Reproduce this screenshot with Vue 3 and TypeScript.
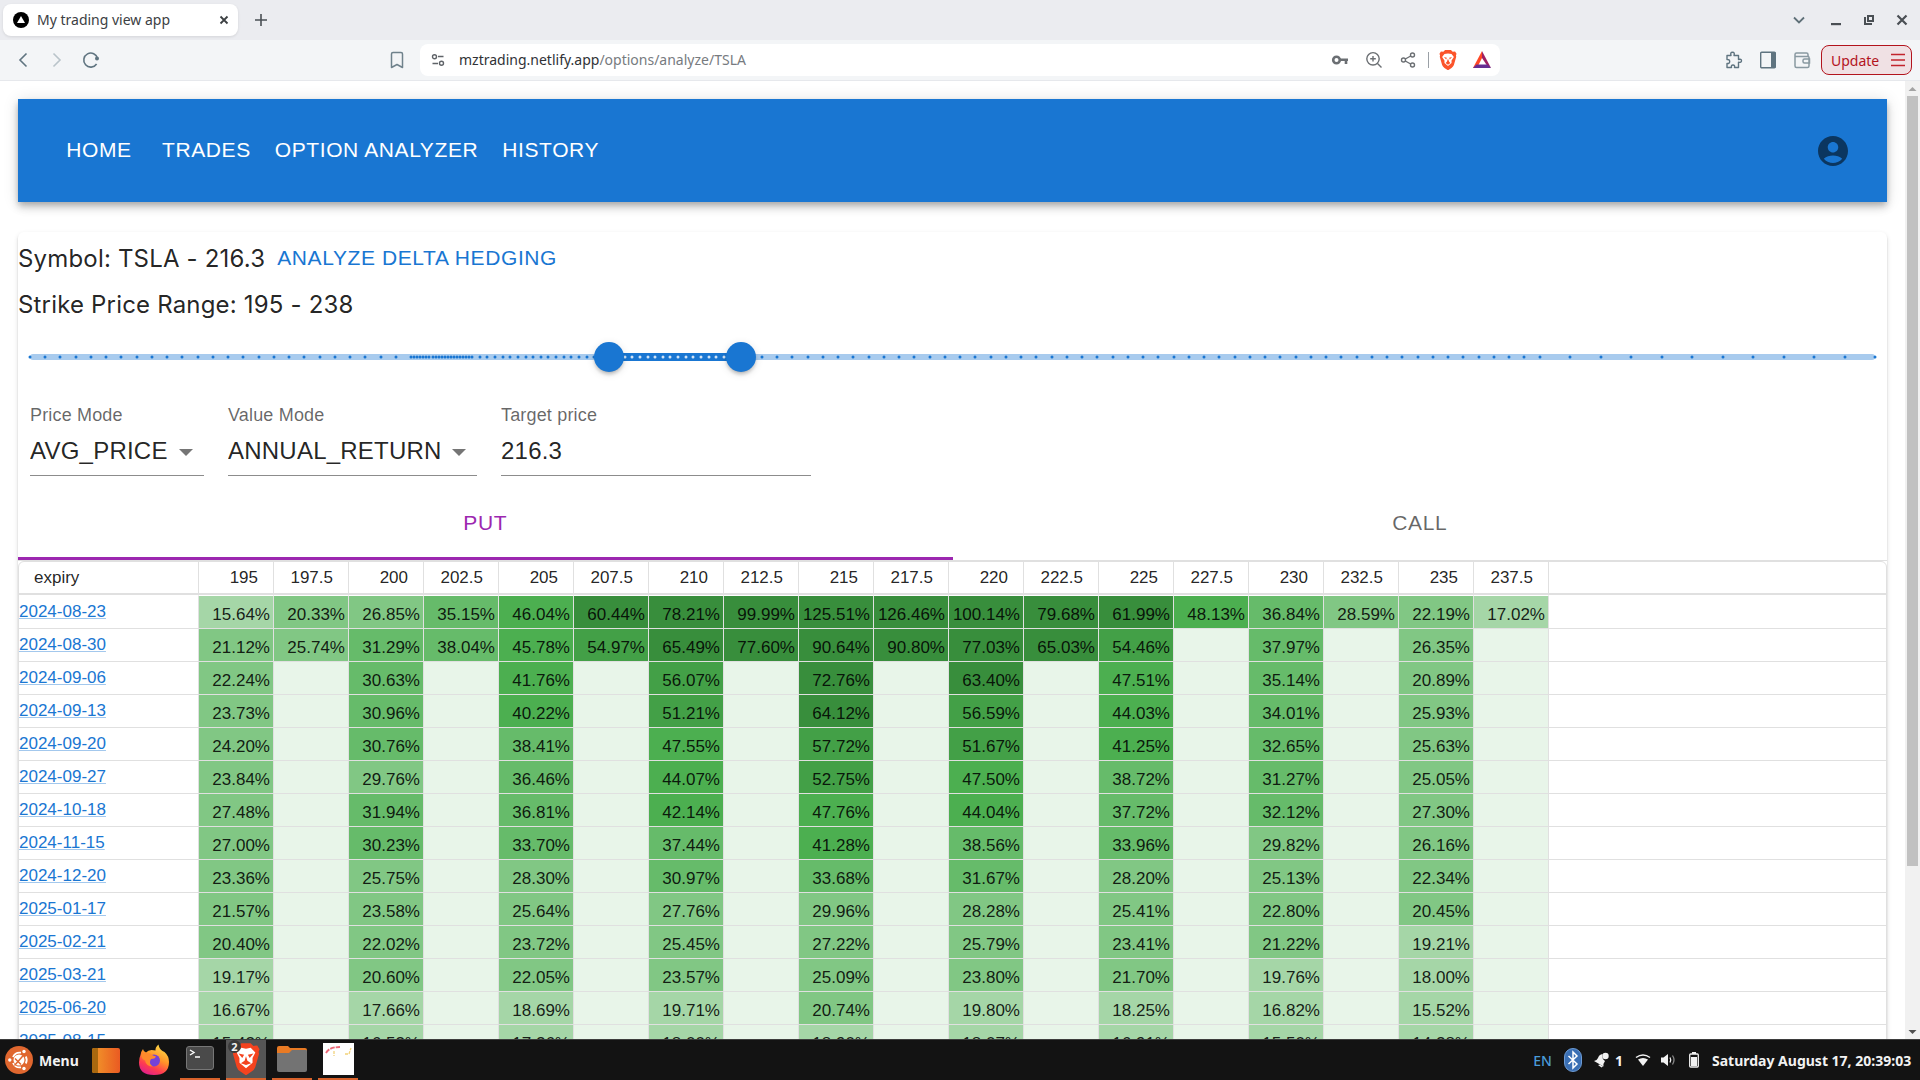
<script setup lang="ts">
import { computed, ref } from 'vue'

const MIN_STRIKE = 5
const MAX_STRIKE = 610

const low = ref(195)
const high = ref(238)
const priceMode = ref('AVG_PRICE')
const valueMode = ref('ANNUAL_RETURN')
const targetPrice = ref('216.3')
const side = ref<'PUT' | 'CALL'>('PUT')

function range(from: number, to: number, step: number): number[] {
  const out: number[] = []
  for (let v = from; v < to; v += step) out.push(v)
  return out
}

const allStrikes = [
  ...range(5, 130, 5),
  ...range(130, 150, 1),
  ...range(150, 240, 2.5),
  ...range(240, 500, 5),
  ...range(500, 611, 10),
]

const percent = (v: number) => ((v - MIN_STRIKE) / (MAX_STRIKE - MIN_STRIKE)) * 100

const marks = computed(() =>
  allStrikes.map((v) => ({ v, left: percent(v) + '%', active: v >= low.value && v <= high.value })),
)
const activeTrack = computed(() => ({
  left: percent(low.value) + '%',
  width: percent(high.value) - percent(low.value) + '%',
}))

const strikes = [195, 197.5, 200, 202.5, 205, 207.5, 210, 212.5, 215, 217.5, 220, 222.5, 225, 227.5, 230, 232.5, 235, 237.5]

// An underscore marks a strike that is not listed for the expiry.
const source: [string, string][] = [
  ['2024-08-23', '15.64 20.33 26.85 35.15 46.04 60.44 78.21 99.99 125.51 126.46 100.14 79.68 61.99 48.13 36.84 28.59 22.19 17.02'],
  ['2024-08-30', '21.12 25.74 31.29 38.04 45.78 54.97 65.49 77.60 90.64 90.80 77.03 65.03 54.46 _ 37.97 _ 26.35 _'],
  ['2024-09-06', '22.24 _ 30.63 _ 41.76 _ 56.07 _ 72.76 _ 63.40 _ 47.51 _ 35.14 _ 20.89 _'],
  ['2024-09-13', '23.73 _ 30.96 _ 40.22 _ 51.21 _ 64.12 _ 56.59 _ 44.03 _ 34.01 _ 25.93 _'],
  ['2024-09-20', '24.20 _ 30.76 _ 38.41 _ 47.55 _ 57.72 _ 51.67 _ 41.25 _ 32.65 _ 25.63 _'],
  ['2024-09-27', '23.84 _ 29.76 _ 36.46 _ 44.07 _ 52.75 _ 47.50 _ 38.72 _ 31.27 _ 25.05 _'],
  ['2024-10-18', '27.48 _ 31.94 _ 36.81 _ 42.14 _ 47.76 _ 44.04 _ 37.72 _ 32.12 _ 27.30 _'],
  ['2024-11-15', '27.00 _ 30.23 _ 33.70 _ 37.44 _ 41.28 _ 38.56 _ 33.96 _ 29.82 _ 26.16 _'],
  ['2024-12-20', '23.36 _ 25.75 _ 28.30 _ 30.97 _ 33.68 _ 31.67 _ 28.20 _ 25.13 _ 22.34 _'],
  ['2025-01-17', '21.57 _ 23.58 _ 25.64 _ 27.76 _ 29.96 _ 28.28 _ 25.41 _ 22.80 _ 20.45 _'],
  ['2025-02-21', '20.40 _ 22.02 _ 23.72 _ 25.45 _ 27.22 _ 25.79 _ 23.41 _ 21.22 _ 19.21 _'],
  ['2025-03-21', '19.17 _ 20.60 _ 22.05 _ 23.57 _ 25.09 _ 23.80 _ 21.70 _ 19.76 _ 18.00 _'],
  ['2025-06-20', '16.67 _ 17.66 _ 18.69 _ 19.71 _ 20.74 _ 19.80 _ 18.25 _ 16.82 _ 15.52 _'],
  ['2025-08-15', '15.42 _ 16.53 _ 17.26 _ 18.00 _ 18.90 _ 18.07 _ 16.91 _ 15.50 _ 14.28 _'],
]

function shade(v: string): string {
  if (v === '_') return 'g50'
  const n = parseFloat(v)
  if (n < 20) return 'g200'
  if (n < 30) return 'g300'
  if (n < 40) return 'g400'
  if (n < 50) return 'g500'
  if (n < 60) return 'g600'
  return 'g700'
}

const rows = source.map(([expiry, values]) => ({
  expiry,
  cells: values.split(' ').map((v) => ({ text: v === '_' ? '' : v + '%', shade: shade(v) })),
}))
</script>

<template>
  <div class="desktop">
    <header class="tabstrip">
      <div class="tab">
        <svg width="16" height="16" viewBox="0 0 16 16"><circle cx="8" cy="8" r="8" /><path d="M8 4l4 7H4z" fill="#fff" /></svg>
        <span class="tab-title">My trading view app</span>
        <button class="icon" aria-label="Close tab">
          <svg width="16" height="16" viewBox="0 0 16 16" fill="none" stroke="#3c4043" stroke-width="1.800"><path d="M4.500 4.500l7 7M11.500 4.500l-7 7" /></svg>
        </button>
      </div>
      <button class="icon new-tab" aria-label="New tab">
        <svg width="16" height="16" viewBox="0 0 16 16" fill="none" stroke="#4a4f54" stroke-width="1.600"><path d="M8 2v12M2 8h12" /></svg>
      </button>
      <div class="window-buttons">
        <button class="icon search-tabs" aria-label="Search tabs">
          <svg width="16" height="16" viewBox="0 0 16 16" fill="none" stroke="#5f7078" stroke-width="1.800"><path d="M3 5.500l5 5 5-5" /></svg>
        </button>
        <button class="icon" aria-label="Minimize">
          <svg width="16" height="16" viewBox="0 0 16 16"><path d="M3 11h10v2.200H3z" fill="#4a4f54" /></svg>
        </button>
        <button class="icon" aria-label="Restore">
          <svg width="16" height="16" viewBox="0 0 16 16" fill="none" stroke="#4a4f54" stroke-width="2"><path d="M7 4h5v5H7zM4 5v7h7" /></svg>
        </button>
        <button class="icon" aria-label="Close window">
          <svg width="16" height="16" viewBox="0 0 16 16" fill="none" stroke="#4a4f54" stroke-width="2.200"><path d="M3.500 3.500l9 9M12.500 3.500l-9 9" /></svg>
        </button>
      </div>
    </header>

    <div class="toolbar">
      <div class="bar-left">
        <button class="icon" aria-label="Back">
          <svg width="18" height="18" viewBox="0 0 18 18" fill="none" stroke="#5f7480" stroke-width="1.600"><path d="M12.500 2.500L6 9l6.500 6.500" /></svg>
        </button>
        <button class="icon" aria-label="Forward">
          <svg width="18" height="18" viewBox="0 0 18 18" fill="none" stroke="#b9c4ca" stroke-width="1.600"><path d="M5.500 2.500L12 9l-6.500 6.500" /></svg>
        </button>
        <button class="icon" aria-label="Reload">
          <svg width="18" height="18" viewBox="0 0 18 18" fill="none" stroke="#5f7480" stroke-width="1.600"><path d="M14.600 13A7 7 0 1 1 15.600 7.500" /><circle cx="15" cy="7.500" r="2" fill="#5f7480" stroke="none" /></svg>
        </button>
        <button class="icon bookmark" aria-label="Bookmark this page">
          <svg width="18" height="18" viewBox="0 0 18 18" fill="none" stroke="#6f828c" stroke-width="1.500" stroke-linejoin="round"><path d="M3.500 3q0-1.500 1.500-1.500h8q1.500 0 1.500 1.500v13.500L9 13.500l-5.500 3z" /></svg>
        </button>
      </div>
      <div class="urlbar">
        <svg width="14" height="14" viewBox="0 0 14 14" fill="none" stroke="#5f6368" stroke-width="1.400"><circle cx="3.500" cy="3.800" r="2" /><path d="M7 3.500h5.500M1.500 10.500H7" /><circle cx="10.500" cy="10.200" r="2" /></svg>
        <div class="url"><span>mztrading.netlify.app</span>/options/analyze/TSLA</div>
        <div class="url-actions">
          <button class="icon" aria-label="Passwords">
            <svg width="18" height="18" viewBox="0 0 18 18" fill="none" stroke="#6b6f73"><circle cx="5.500" cy="9" r="3.300" stroke-width="2.600" /><path d="M9 8.700h8M15 9v4" stroke-width="2.600" /></svg>
          </button>
          <button class="icon" aria-label="Zoom">
            <svg width="18" height="18" viewBox="0 0 18 18" fill="none" stroke="#6b6f73" stroke-width="1.400"><circle cx="8" cy="7.800" r="6.200" /><path d="M12.500 12.400l4 4M8 5v5.600M5.200 7.800h5.600" /></svg>
          </button>
          <button class="icon" aria-label="Share">
            <svg width="18" height="18" viewBox="0 0 18 18" fill="none" stroke="#6b6f73" stroke-width="1.400"><circle cx="4.500" cy="9" r="2" /><circle cx="13.500" cy="4" r="2" /><circle cx="13.500" cy="14" r="2" /><path d="M6.300 8l5.400-3M6.300 10l5.400 3" /></svg>
          </button>
          <span class="separator"></span>
          <button class="icon" aria-label="Brave Shields">
            <svg width="18" height="20" viewBox="0 0 30 34"><path d="M7 3l3-3h10l3 3 4-.5 2.500 4-1 3 .5 2-4 14q-1 3-4 5l-6 4-6-4q-3-2-4-5L1 11.500l.5-2-1-3 2.500-4z" fill="#fb542b" /><path d="M15 6l6 1 4 5-4 6v4l-6 5-6-5v-4l-4-6 4-5z" fill="#fff" /><path d="M8 12l5 1-1 3zM22 12l-5 1 1 3zM15 15l2 5 2 2-4 3-4-3 2-2z" fill="#fb542b" /></svg>
          </button>
          <button class="icon" aria-label="Brave Rewards">
            <svg width="18" height="18" viewBox="0 0 18 18"><path d="M9 0L0 17h4l5-10z" fill="#ff4724" /><path d="M9 0l9 17-4-2.500L9 7z" fill="#9e1f63" /><path d="M0 17l3.500-3.500h11L18 17z" fill="#662d91" /></svg>
          </button>
        </div>
      </div>
      <div class="bar-right">
        <button class="icon" aria-label="Extensions">
          <svg width="18" height="18" viewBox="0 0 18 18" fill="none" stroke="#5f7480" stroke-width="1.400" stroke-linejoin="round"><path d="M2 4.500h4q-1-3.300 1.500-3.300T9 4.500h4.500v4q3-.8 3 1.300t-3 1.400v5.300h-4q.6-2.500-1.500-2.500t-1.500 2.500H2v-4q2.700.3 2.700-2T2 8.500z" /></svg>
        </button>
        <button class="icon" aria-label="Sidebar">
          <svg width="18" height="18" viewBox="0 0 18 18"><rect x="1.700" y="1.200" width="14.600" height="15.600" rx="1" fill="none" stroke="#5f7480" stroke-width="1.400" /><path d="M12 1h4.500v16H12z" fill="#5f7480" /></svg>
        </button>
        <button class="icon" aria-label="Wallet">
          <svg width="18" height="18" viewBox="0 0 18 18" fill="none" stroke="#8999a1" stroke-width="1.500"><path d="M16 5.500V15q0 1.500-1.500 1.500h-11Q2 16.500 2 15V3.500Q2 2 3.500 2h10q1.500 0 1.500 1.500V5M2 5.500h14M16.500 8h-5q-1.500 0-1.500 1.500v1q0 1.500 1.500 1.500h5z" /></svg>
        </button>
        <button class="update">
          Update
          <svg width="14" height="14" viewBox="0 0 14 14" stroke="#c2242c" stroke-width="1.500"><path d="M0 1.500h14M0 7h14M0 12.500h14" /></svg>
        </button>
      </div>
    </div>

    <div class="viewport">
      <main class="page">
        <nav class="appbar">
          <a href="#home">HOME</a>
          <a href="#trades">TRADES</a>
          <a href="#options">OPTION ANALYZER</a>
          <a href="#history">HISTORY</a>
          <button class="icon account" aria-label="Account">
            <svg width="36" height="36" viewBox="0 0 24 24" fill="#0b3660"><path d="M12 2C6.480 2 2 6.480 2 12s4.480 10 10 10 10-4.480 10-10S17.520 2 12 2zm0 4c1.930 0 3.500 1.570 3.500 3.500S13.930 13 12 13s-3.500-1.570-3.500-3.500S10.070 6 12 6zm0 14c-2.030 0-4.430-.82-6.140-2.880C7.550 15.800 9.680 15 12 15s4.450.8 6.140 2.120C16.430 19.180 14.030 20 12 20z" /></svg>
          </button>
        </nav>

        <section class="card">
          <div class="line">
            <span>Symbol: TSLA - 216.3</span>
            <a href="#hedging">ANALYZE DELTA HEDGING</a>
          </div>
          <div class="line">Strike Price Range: {{ low }} - {{ high }}</div>

          <div class="slider">
            <div class="rail"></div>
            <div class="active" :style="activeTrack"></div>
            <i v-for="m in marks" :key="m.v" class="mark" :class="{ on: m.active }" :style="{ left: m.left }"></i>
            <input v-model.number="low" type="range" :min="MIN_STRIKE" :max="MAX_STRIKE" step="1" aria-label="Lowest strike" />
            <input v-model.number="high" type="range" :min="MIN_STRIKE" :max="MAX_STRIKE" step="1" aria-label="Highest strike" />
          </div>

          <form class="controls" @submit.prevent>
            <div class="field price">
              <label for="price-mode">Price Mode</label>
              <div class="select">
                <select id="price-mode" v-model="priceMode">
                  <option>AVG_PRICE</option>
                  <option>BID_PRICE</option>
                  <option>ASK_PRICE</option>
                </select>
              </div>
            </div>
            <div class="field value">
              <label for="value-mode">Value Mode</label>
              <div class="select">
                <select id="value-mode" v-model="valueMode">
                  <option>ANNUAL_RETURN</option>
                  <option>TOTAL_RETURN</option>
                  <option>PRICE</option>
                </select>
              </div>
            </div>
            <div class="field target">
              <label for="target-price">Target price</label>
              <input id="target-price" v-model="targetPrice" type="text" />
            </div>
          </form>

          <div class="tabs" role="tablist">
            <button role="tab" :aria-selected="side === 'PUT'" :class="{ selected: side === 'PUT' }" @click="side = 'PUT'">PUT</button>
            <button role="tab" :aria-selected="side === 'CALL'" :class="{ selected: side === 'CALL' }" @click="side = 'CALL'">CALL</button>
          </div>

          <div class="grid">
            <table>
              <thead>
                <tr>
                  <th class="expiry">expiry</th>
                  <th v-for="s in strikes" :key="s" class="strike">{{ s }}</th>
                  <th class="filler"></th>
                </tr>
              </thead>
              <tbody>
                <tr v-for="row in rows" :key="row.expiry">
                  <td class="expiry"><a :href="'#' + row.expiry">{{ row.expiry }}</a></td>
                  <td v-for="(cell, i) in row.cells" :key="i" class="num" :class="cell.shade">{{ cell.text }}</td>
                  <td class="filler"></td>
                </tr>
              </tbody>
            </table>
          </div>
        </section>
      </main>
      <div class="scrollbar">
        <svg width="15" height="15" viewBox="0 0 15 15"><path d="M3.500 10L7.500 6l4 4z" fill="#a3a3a3" /></svg>
        <div class="scroll-area"><div class="scroll-thumb"></div></div>
        <svg width="15" height="15" viewBox="0 0 15 15"><path d="M3.500 6l4 4 4-4z" fill="#505050" /></svg>
      </div>
    </div>

    <footer class="taskbar">
      <button class="menu">
        <svg width="28" height="28" viewBox="0 0 28 28"><circle cx="14" cy="14" r="14" fill="#e0672f" /><path d="M8 11a7.500 7.500 0 0 1 8-4.300M20.800 10.500a7.500 7.500 0 0 1 0 7M8 17a7.500 7.500 0 0 0 8 4.300" fill="none" stroke="#fff" stroke-width="1.800" /><circle cx="14" cy="14" r="5.500" fill="#fff" /><path d="M9.500 19.500L20 7.500M10 12.500l6 6" stroke="#e0672f" stroke-width="1.500" /><circle cx="4.800" cy="14" r="1.700" fill="#fff" /><circle cx="19" cy="5.500" r="1.700" fill="#fff" /><circle cx="19" cy="22.500" r="1.700" fill="#fff" /></svg>
        Menu
      </button>
      <div class="launchers">
        <button class="launcher" aria-label="Show desktop">
          <svg width="30" height="30" viewBox="0 0 30 30"><defs><linearGradient id="desk"><stop offset="0" stop-color="#f29a2a" /><stop offset="1" stop-color="#ea5a22" /></linearGradient></defs><rect x="1" y="3" width="28" height="25" rx="2" fill="url(#desk)" /><path d="M3 3h4v25H3q-2 0-2-2V5q0-2 2-2z" fill="#a9680f" /></svg>
        </button>
        <button class="launcher" aria-label="Firefox">
          <svg width="32" height="32" viewBox="0 0 32 32"><defs><linearGradient id="fox" x1="0.800" y1="0" x2="0.300" y2="1"><stop offset="0" stop-color="#ffe14a" /><stop offset="0.450" stop-color="#ff9328" /><stop offset="0.750" stop-color="#ff3c50" /><stop offset="1" stop-color="#e0208a" /></linearGradient></defs><path d="M2.500 11q.5-3.500 2.500-6 .5 3 3 3.500 2-2.500 5.500-2.500 2.500 0 4 .5Q17 3.500 20.500.5q.5 4 4 6.500l2 1q4.500 4 4.500 10 0 13-15 13T1 18.500Q1 14 2.500 11z" fill="url(#fox)" /><circle cx="16" cy="16.500" r="6" fill="#7542d8" /><path d="M3 11q2-3 6-2 4 0 6 2.500l3 1q-1 2.500-5 2.500-3 4.500 2 7.500-7 0-8-6-3-1-4-5.500z" fill="#ff8a2b" /></svg>
        </button>
      </div>
      <button class="task" aria-label="Terminal">
        <svg width="30" height="30" viewBox="0 0 30 30"><rect x="1.500" y="2.500" width="27" height="23" rx="2.500" fill="#4a4a4a" stroke="#777" /><path d="M5 6l4 2.500L5 11M10 13h5" fill="none" stroke="#fff" stroke-width="1.400" /></svg>
      </button>
      <button class="task current" aria-label="Brave">
        <svg width="28" height="32" viewBox="0 0 30 34"><path d="M7 3l3-3h10l3 3 4-.5 2.500 4-1 3 .5 2-4 14q-1 3-4 5l-6 4-6-4q-3-2-4-5L1 11.500l.5-2-1-3 2.500-4z" fill="#f4431f" /><path d="M15 6l5-1 5 5-3 6v5l-7 6-7-6v-5l-3-6 5-5z" fill="#fff" /><path d="M7 11l6 1.500-2 3.500zM23 11l-6 1.500 2 3.500zM15 14l1.500 5 4 2.500-5.500 2-5.500-2 4-2.500z" fill="#f4431f" /></svg>
        <span class="badge">2</span>
      </button>
      <button class="task" aria-label="Files">
        <svg width="32" height="30" viewBox="0 0 32 30"><path d="M1 4q0-2 2-2h9l2 2h15q2 0 2 2v5H1z" fill="#e87a24" /><path d="M1 9h12l3-3h14q1 0 1 1v19q0 2-2 2H3q-2 0-2-2z" fill="#737373" /></svg>
      </button>
      <button class="task" aria-label="Drawing">
        <svg width="31" height="32" viewBox="0 0 31 32"><path d="M0 0h31v32H0z" fill="#fff" /><path d="M3 10q3-6 14-6" fill="none" stroke="#ec6a78" stroke-width="1.800" stroke-dasharray="5 1" /><path d="M11 8v5M22 11h4l2-6" fill="none" stroke="#f2d27a" stroke-width="1.300" stroke-dasharray="3 1" /></svg>
      </button>
      <div class="tray">
        <span class="lang">EN</span>
        <svg width="18" height="24" viewBox="0 0 18 24"><rect x="0.500" y="0.500" width="17" height="23" rx="8.500" fill="#3a6fb4" stroke="#6d9bd4" /><path d="M4.500 8l8.500 8-4 4V4l4 4-8.500 8" fill="none" stroke="#fff" stroke-width="1.500" /></svg>
        <svg width="15" height="16" viewBox="0 0 15 16" fill="#f2f2f2"><path d="M8.500 2Q5 2.500 4 6 3 8.500 0 9l9.500 5.500q-.5-3 1.500-5.500Q7.500 7 8.500 2z" /><circle cx="11.500" cy="4" r="3.200" /><path d="M4 13l3.500 2.500L9 14.500l-3-2z" /></svg>
        <span class="count">1</span>
        <svg class="wifi" width="16" height="16" viewBox="0 0 16 16"><path d="M1 5.500q7-5 14 0" fill="none" stroke="#f2f2f2" stroke-width="1.500" /><path d="M3 7.500q5-3 10 0L8 14z" fill="#f2f2f2" /></svg>
        <svg width="16" height="16" viewBox="0 0 16 16"><path d="M1 5.500h2.500L8 2v12l-4.500-3.500H1z" fill="#f2f2f2" /><path d="M10 5.500q1.500 2.500 0 5" fill="none" stroke="#f2f2f2" stroke-width="1.300" /><path d="M12.500 3.500q3 4.500 0 9" fill="none" stroke="#888" stroke-width="1.300" /></svg>
        <svg width="12" height="16" viewBox="0 0 12 16"><path d="M4 0h4v2H4z" fill="#f2f2f2" /><rect x="1.700" y="2" width="8.600" height="13" rx="1" fill="none" stroke="#f2f2f2" stroke-width="1.300" /><path d="M3 5h6v9H3z" fill="#f2f2f2" /></svg>
        <span class="clock">Saturday August 17, 20:39:03</span>
      </div>
    </footer>
  </div>
</template>

<style>
html,
body {
  margin: 0;
  background: #fff;
}
</style>

<style scoped>
* {
  box-sizing: border-box;
}
.desktop {
  display: flex;
  flex-direction: column;
  height: 100vh;
  overflow: hidden;
  font-family: "Liberation Sans", Arial, sans-serif;
  color: rgba(0, 0, 0, 0.87);
}
button {
  font: inherit;
  border: 0;
  padding: 0;
  background: none;
  color: inherit;
}
a {
  text-decoration: none;
}
svg {
  display: block;
  flex: none;
}
.icon {
  display: flex;
  align-items: center;
  justify-content: center;
  flex: none;
}

/* Browser chrome */
.tabstrip {
  display: flex;
  align-items: center;
  flex: none;
  height: 40px;
  padding: 0 10px 0 3px;
  background: #ebecf0;
  font-family: "Noto Sans", sans-serif;
}
.tab {
  display: flex;
  align-items: center;
  gap: 8px;
  width: 235px;
  height: 32px;
  padding: 0 6px 0 10px;
  border-radius: 8px;
  background: #fff;
  box-shadow: 0 1px 3px rgba(0, 0, 0, 0.1);
}
.tab-title {
  flex: 1;
  padding-bottom: 2px;
  font-size: 14px;
  color: #3c4043;
  white-space: nowrap;
}
.new-tab {
  margin-left: 15px;
}
.window-buttons {
  display: flex;
  gap: 17px;
  margin-left: auto;
}
.search-tabs {
  margin-right: 4px;
}
.toolbar {
  display: flex;
  flex: none;
  height: 41px;
  border-bottom: 1px solid #e6e8ec;
  background: #f3f5f7;
  font-family: "Noto Sans", sans-serif;
}
.bar-left,
.bar-right {
  display: flex;
  align-items: center;
  flex: 1 1 420px;
  gap: 16px;
}
.bar-left {
  padding: 0 14px;
}
.bookmark {
  margin-left: auto;
}
.bar-right {
  justify-content: flex-end;
  padding-right: 8px;
}
.urlbar {
  display: flex;
  align-items: center;
  align-self: center;
  flex: 0 1 1080px;
  height: 32px;
  padding: 0 9px 0 11px;
  border-radius: 8px;
  background: #fff;
}
.url {
  flex: 1;
  margin-left: 14px;
  padding-bottom: 2px;
  font-size: 14px;
  color: #777b80;
}
.url span {
  color: #303236;
}
.url-actions {
  display: flex;
  align-items: center;
  gap: 16px;
}
.separator {
  width: 1px;
  height: 16px;
  margin: 0 -6px 0 -5px;
  background: #9aa0a6;
}
.update {
  display: flex;
  align-items: center;
  justify-content: space-between;
  width: 91px;
  height: 30px;
  margin-left: -6px;
  padding: 0 6px 0 9px;
  border: 1px solid #b3141d;
  border-radius: 8px;
  background: #f0e1e4;
  color: #b3141d;
  font-size: 14px;
}

/* Page */
.viewport {
  display: flex;
  flex: 1;
  min-height: 0;
}
.page {
  flex: 1;
  min-width: 0;
  padding: 18px 18px 0;
  overflow: hidden;
}
.scrollbar {
  display: flex;
  flex-direction: column;
  flex: none;
  width: 15px;
  background: #f1f1f1;
}
.scroll-area {
  flex: 1;
  padding: 0 2px;
}
.scroll-thumb {
  height: 83%;
  background: #c1c1c1;
}
.appbar {
  display: flex;
  align-items: center;
  height: 103px;
  padding: 0 36px 0 30px;
  background: #1976d2;
  box-shadow: 0 3px 6px -1px rgba(0, 0, 0, 0.2), 0 6px 8px rgba(0, 0, 0, 0.14), 0 1px 15px rgba(0, 0, 0, 0.12);
}
.appbar a {
  min-width: 102px;
  padding: 0 12px 2px;
  color: #fff;
  text-align: center;
}
.appbar a,
.line a,
.tabs button {
  font-family: "Liberation Sans", Arial, sans-serif;
  font-size: 21px;
  line-height: 36px;
  letter-spacing: 0.02857em;
}
.account {
  margin-left: auto;
}
.card {
  margin-top: 30px;
  padding-top: 3px;
  border-radius: 6px;
  background: #fff;
  box-shadow: 0 3px 2px -2px rgba(0, 0, 0, 0.2), 0 2px 2px rgba(0, 0, 0, 0.14), 0 2px 5px rgba(0, 0, 0, 0.12);
}
.line {
  display: flex;
  align-items: center;
  gap: 12px;
  height: 46px;
  font-family: Inter, sans-serif;
  font-size: 24px;
  letter-spacing: 0.0075em;
}
.line a {
  color: #1976d2;
}
.slider {
  position: relative;
  height: 60px;
  margin: 0 12px;
}
.rail,
.active,
.mark,
.slider input {
  position: absolute;
  top: 50%;
  transform: translateY(-50%);
}
.rail {
  width: 100%;
  height: 6px;
  border-radius: 3px;
  background: #a8cbee;
}
.active {
  height: 8px;
  background: #1976d2;
}
.mark {
  width: 3px;
  height: 3px;
  border-radius: 50%;
  background: #1976d2;
  transform: translate(-50%, -50%);
}
.mark.on {
  background: #fff;
  opacity: 0.8;
}
.slider input {
  left: -15px;
  width: calc(100% + 30px);
  height: 30px;
  margin: 0;
  background: none;
  appearance: none;
  pointer-events: none;
}
.slider input::-webkit-slider-thumb {
  width: 30px;
  height: 30px;
  border-radius: 50%;
  background: #1976d2;
  box-shadow: 0 3px 2px -3px rgba(0, 0, 0, 0.2), 0 3px 3px rgba(0, 0, 0, 0.14), 0 2px 8px rgba(0, 0, 0, 0.12);
  appearance: none;
  pointer-events: auto;
}
.controls {
  display: flex;
  gap: 24px;
  margin: 16px 12px 0;
}
.field label {
  display: block;
  font-size: 18px;
  line-height: 24px;
  letter-spacing: 0.00938em;
  color: rgba(0, 0, 0, 0.6);
}
.field select,
.field input {
  display: block;
  width: 100%;
  height: 49px;
  padding: 0;
  border: 0;
  border-bottom: 1px solid #8c8c8c;
  border-radius: 0;
  background: none;
  color: inherit;
  font-family: inherit;
  font-size: 24px;
  letter-spacing: 0.00938em;
  appearance: none;
}
.field select {
  padding-bottom: 2px;
}
.price {
  width: 174px;
}
.value {
  width: 249px;
}
.target {
  width: 310px;
}
.select {
  position: relative;
}
.select::after {
  content: "";
  position: absolute;
  top: 22px;
  right: 11px;
  border: 7px solid transparent;
  border-top-color: #757575;
  border-bottom: 0;
  pointer-events: none;
}
.tabs {
  display: flex;
  height: 85px;
  padding-top: 9px;
  border-bottom: 1px solid #e0e0e0;
}
.tabs button {
  flex: 1;
  padding-top: 4px;
  border-bottom: 3px solid transparent;
  color: rgba(0, 0, 0, 0.6);
}
.tabs .selected {
  border-bottom-color: #9c27b0;
  color: #9c27b0;
}

/* Option matrix */
.grid {
  border: 1px solid #e0e0e0;
  border-radius: 6px;
}
table {
  width: 100%;
  border-spacing: 0;
  table-layout: fixed;
  font-size: 17px;
  line-height: 20px;
}
th,
td {
  height: 33px;
  padding: 0;
  border-right: 1px solid #e0e0e0;
  border-bottom: 1px solid #e0e0e0;
  font-weight: 400;
  vertical-align: top;
}
th {
  width: 75px;
  border-bottom-width: 2px;
  vertical-align: middle;
}
th.expiry {
  width: 180px;
  padding-left: 15px;
  text-align: left;
}
th.filler {
  width: auto;
}
.strike {
  padding-right: 15px;
  text-align: right;
}
td.num {
  padding: 9px 3px 0 0;
  text-align: right;
}
tbody tr:first-child td {
  height: 34px;
  border-top: 1px solid #fff;
  background-clip: padding-box;
}
td.expiry {
  padding-top: 6px;
}
td a {
  color: #1976d2;
  text-decoration: underline;
  text-decoration-color: rgba(25, 118, 210, 0.4);
}
.filler {
  border-right: 0;
}
.g50 { background: #e8f5e9; }
.g200 { background: #a5d6a7; }
.g300 { background: #81c784; }
.g400 { background: #66bb6a; }
.g500 { background: #4caf50; }
.g600 { background: #43a047; }
.g700 { background: #388e3c; }

/* Desktop panel */
.taskbar {
  display: flex;
  align-items: stretch;
  gap: 6px;
  flex: none;
  height: 41px;
  padding: 0 4px 0 5px;
  border-top: 1px solid #3d3d3d;
  background: #131313;
  color: #f2f2f2;
  font-family: "Noto Sans", sans-serif;
  font-size: 14px;
  font-weight: 700;
}
.menu {
  display: flex;
  align-items: center;
  gap: 6px;
  width: 75px;
}
.launchers {
  display: flex;
  gap: 8px;
}
.launcher,
.task {
  position: relative;
  display: flex;
  align-items: center;
  justify-content: center;
  width: 40px;
}
.task {
  border-bottom: 2px solid #d9622b;
}
.current {
  background: #555;
}
.badge {
  position: absolute;
  top: 0;
  left: 2px;
  width: 13px;
  height: 13px;
  border-radius: 50%;
  background: #3a3a3a;
  font-size: 11px;
  line-height: 13px;
}
.tray {
  display: flex;
  align-items: center;
  gap: 12px;
  margin-left: auto;
}
.lang {
  color: #4a9bd9;
  font-weight: 500;
}
.count {
  margin-left: -6px;
}
.wifi {
  margin-right: -3px;
}
.clock {
  min-width: 204px;
}
</style>
